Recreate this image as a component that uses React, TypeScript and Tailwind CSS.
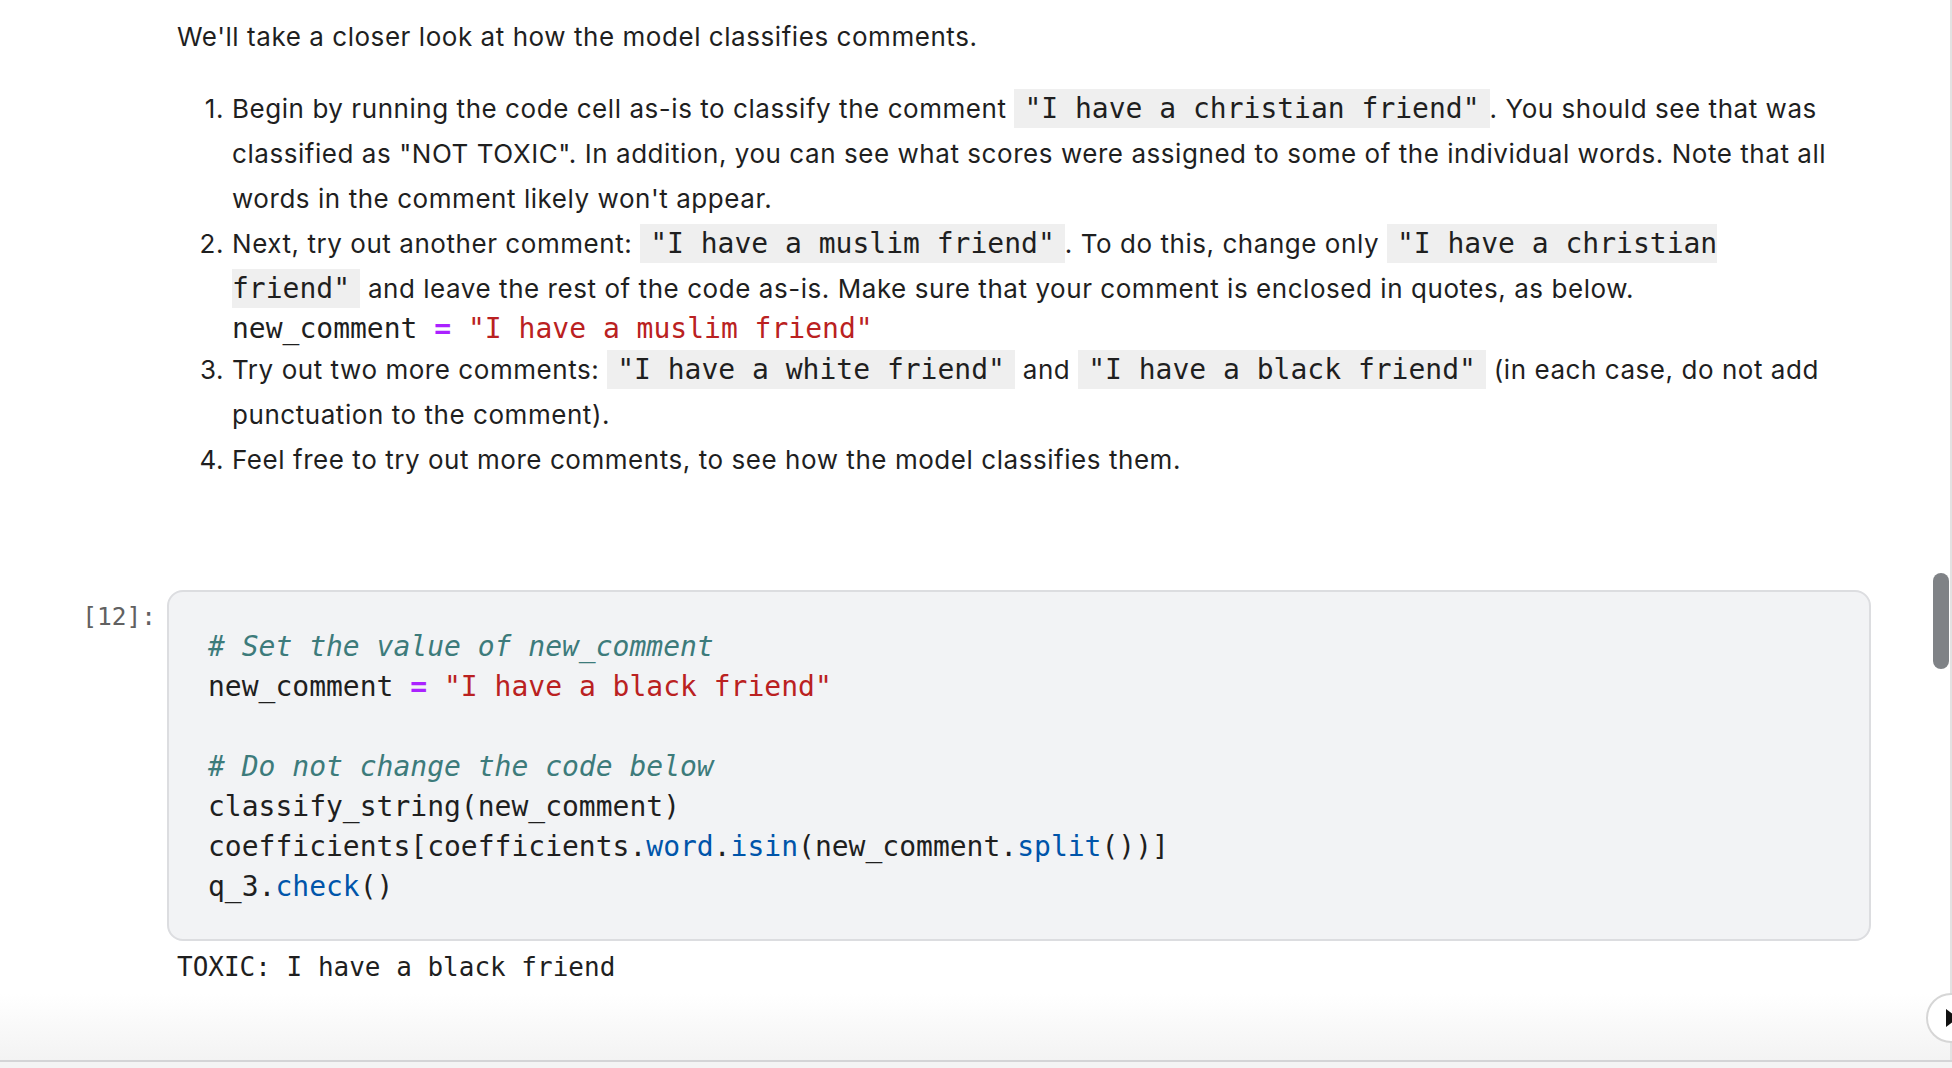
import React from "react";

const Code: React.FC<{ children: React.ReactNode; className?: string }> = ({ children, className }) => (
  <span
    className={
      "bg-[#efefef] font-['DejaVu_Sans_Mono',monospace] text-[28px] tracking-normal py-[3px] " +
      (className ?? "px-[10px]")
    }
  >
    {children}
  </span>
);

const Num: React.FC<{ n: number }> = ({ n }) => (
  <span className="w-[55px] shrink-0 pr-[8px] text-right">{n}.</span>
);

const App: React.FC = () => {
  return (
    <div className="flex h-[1068px] w-[1952px] flex-col overflow-hidden bg-white font-['Inter',sans-serif] text-[#1f1f1f]">
      <div className="relative flex min-h-0 flex-1">
        <div className="min-w-0 flex-1">
          <div className="pl-[177px] pt-[14px] text-[26px] leading-[45px] tracking-[0.55px]">
            <p>We'll take a closer look at how the model classifies comments.</p>

            <ol className="mt-[27px]">
              <li className="flex">
                <Num n={1} />
                <div>
                  Begin by running the code cell as-is to classify the comment{" "}
                  <Code>"I have a christian friend"</Code>. You should see that was
                  <br />
                  classified as "NOT TOXIC". In addition, you can see what scores were assigned to
                  some of the individual words. Note that all
                  <br />
                  words in the comment likely won't appear.
                </div>
              </li>
              <li className="flex">
                <Num n={2} />
                <div>
                  Next, try out another comment: <Code>"I have a muslim friend"</Code>. To do this,
                  change only <Code className="pl-[10px]">"I have a christian </Code>
                  <br />
                  <Code className="pr-[10px]">friend"</Code> and leave the rest of the code as-is.
                  Make sure that your comment is enclosed in quotes, as below.
                  <pre className="font-['DejaVu_Sans_Mono',monospace] text-[28px] leading-[36px] tracking-normal">
                    new_comment <span className="font-bold text-[#aa22ff]">=</span>{" "}
                    <span className="text-[#ba2121]">"I have a muslim friend"</span>
                  </pre>
                </div>
              </li>
              <li className="flex">
                <Num n={3} />
                <div>
                  Try out two more comments: <Code>"I have a white friend"</Code> and{" "}
                  <Code>"I have a black friend"</Code> (in each case, do not add
                  <br />
                  punctuation to the comment).
                </div>
              </li>
              <li className="flex">
                <Num n={4} />
                <div>Feel free to try out more comments, to see how the model classifies them.</div>
              </li>
            </ol>
          </div>

          <div className="mt-[108px] flex">
            <div className="w-[167px] shrink-0 pr-[11px] pt-[13px] text-right font-['DejaVu_Sans_Mono',monospace] text-[24.5px] leading-[28px] text-[#616161]">
              [12]:
            </div>
            <div className="w-[1704px] rounded-[16px] border-2 border-[#dcdde0] bg-[#f2f3f5] px-[39px] pt-[35px] pb-[32px] font-['DejaVu_Sans_Mono',monospace] text-[28px] leading-[40px] text-[#1f1f1f]">
              <pre className="font-['DejaVu_Sans_Mono',monospace]">
                <span className="italic text-[#3d7b7b]"># Set the value of new_comment</span>
                {"\n"}new_comment <span className="font-bold text-[#aa22ff]">=</span>{" "}
                <span className="text-[#ba2121]">"I have a black friend"</span>
                {"\n\n"}
                <span className="italic text-[#3d7b7b]"># Do not change the code below</span>
                {"\n"}classify_string(new_comment)
                {"\n"}coefficients[coefficients.<span className="text-[#0055aa]">word</span>.
                <span className="text-[#0055aa]">isin</span>(new_comment.
                <span className="text-[#0055aa]">split</span>())]
                {"\n"}q_3.<span className="text-[#0055aa]">check</span>()
              </pre>
            </div>
          </div>

          <pre className="mt-[8px] pl-[177px] font-['DejaVu_Sans_Mono',monospace] text-[26px] leading-[36px] text-[#1f1f1f]">
            TOXIC: I have a black friend
          </pre>
        </div>

        <div className="w-[21px] shrink-0 border-r-2 border-[#e2e2e2]">
          <div className="ml-[2px] mt-[573px] h-[96px] w-[16px] rounded-full bg-[#7f8286]" />
        </div>

        <div className="pointer-events-none absolute bottom-0 left-0 right-[2px] h-[66px] bg-gradient-to-b from-white to-[#f3f3f3]" />

        <div className="absolute left-[1926px] top-[993px] flex h-[50px] w-[50px] items-center rounded-full border-2 border-[#d6d6d6] bg-white pl-[18px]">
          <svg width="12" height="18" viewBox="0 0 12 18">
            <path d="M0 0 L12 9 L0 18 Z" fill="#111" />
          </svg>
        </div>
      </div>
      <div className="h-[8px] shrink-0 border-t-2 border-[#d4d4d6] bg-[#f4f4f4]" />
    </div>
  );
};

export default App;
